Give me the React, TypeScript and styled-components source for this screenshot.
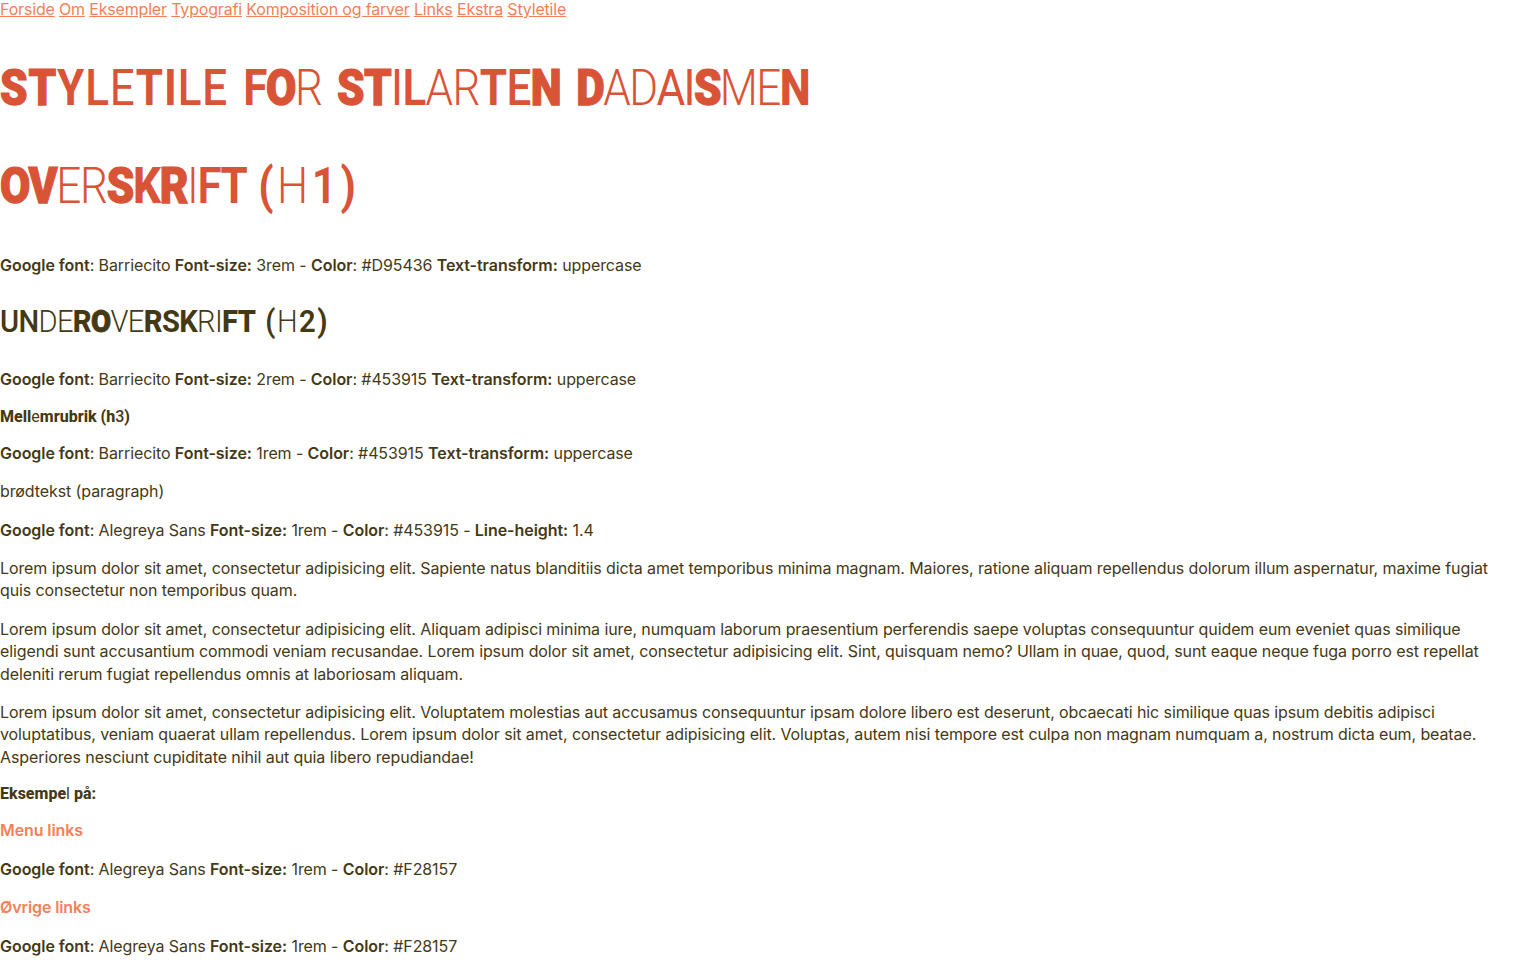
import React from "react";
import styled, { createGlobalStyle } from "styled-components";

const Global = createGlobalStyle`
  html, body { margin: 0; padding: 0; background: #fff; }
  body {
    font-family: "Inter", "Open Sans", sans-serif;
    font-size: 16px;
    letter-spacing: -0.1px;
    color: #453915;
  }
`;

const Nav = styled.nav`
  line-height: 19px;
  letter-spacing: -0.175px;
`;

const NavLink = styled.a`
  color: #f28157;
  text-decoration: underline;
`;

const Heading = styled.h1<{ $squeeze: number; $color: string; $size: number; $height: number; $top: number; $bottom: number; $gap?: number }>`
  margin: ${(p) => p.$top}px 0 ${(p) => p.$bottom}px;
  font-family: "Roboto", sans-serif;
  font-size: ${(p) => p.$size}px;
  line-height: ${(p) => p.$height}px;
  letter-spacing: 0;
  word-spacing: ${(p) => p.$gap ?? 0}px;
  font-weight: 400;
  white-space: nowrap;
  color: ${(p) => p.$color};
  transform: scaleX(${(p) => p.$squeeze});
  transform-origin: left center;
`;

const Word = styled.span<{ $track: number }>`
  letter-spacing: ${(p) => p.$track}px;
`;

const Glyph = styled.span<{ $weight: number }>`
  font-weight: ${(p) => p.$weight};
  -webkit-text-stroke: ${(p) => (p.$weight >= 900 ? "0.025em" : "0")} currentColor;
`;

const Para = styled.p`
  margin: 16px 0;
  line-height: 22.4px;
`;

const Strong = styled.strong`
  font-weight: 600;
  letter-spacing: -0.05px;
`;

const LinkSample = styled.p`
  margin: 16px 0;
  line-height: 22.4px;
  font-weight: 600;
  color: #f28157;
`;

/* Each digit in `w` is the stroke weight of the letter at that place, in hundreds;
   `tracks` holds the letter spacing of each word. */
const Lettered = ({ text, w, tracks = [] }: { text: string; w: string; tracks?: number[] }) => {
  const weights = w.split(" ");
  return (
    <>
      {text.split(" ").map((word, wi) => (
        <React.Fragment key={wi}>
          {wi > 0 && " "}
          <Word $track={tracks[wi] ?? 0}>
            {word.split("").map((c, i) => (
              <Glyph key={i} $weight={Number(weights[wi]?.[i] ?? 4) * 100}>
                {c}
              </Glyph>
            ))}
          </Word>
        </React.Fragment>
      ))}
    </>
  );
};

const links = ["Forside", "Om", "Eksempler", "Typografi", "Komposition og farver", "Links", "Ekstra", "Styletile"];

const Spec = ({ font, size, color, last, lastValue }: { font: string; size: string; color: string; last: string; lastValue: string }) => (
  <Para>
    <Strong>Google font</Strong>: {font} <Strong>Font-size:</Strong> {size} - <Strong>Color</Strong>: {color}
    {last && (
      <>
        {" "}
        <Strong>{last}:</Strong> {lastValue}
      </>
    )}
  </Para>
);

export default function App() {
  return (
    <>
      <Global />
      <Nav>
        {links.map((l, i) => (
          <React.Fragment key={l}>
            {i > 0 && " "}
            <NavLink href="#">{l}</NavLink>
          </React.Fragment>
        ))}
      </Nav>
      <Heading $squeeze={0.88} $color="#d95436" $size={50} $height={66} $top={36} $bottom={32} $gap={5}>
        <Lettered
          text="STYLETILE FOR STILARTEN DADAISMEN"
          w="997547755 793 994633759 933449338"
          tracks={[1, -1.6, -0.7, -1.8]}
        />
      </Heading>
      <Heading $squeeze={0.88} $color="#d95436" $size={50} $height={66} $top={32} $bottom={35} $gap={1}>
        <Lettered text="OVERSKRIFT (H1)" w="9933989367 7367" tracks={[-1.5, 4]} />
      </Heading>
      <Spec font="Barriecito" size="3rem" color="#D95436" last="Text-transform" lastValue="uppercase" />
      <Heading as="h2" $squeeze={0.94} $color="#453915" $size={31} $height={38} $top={27} $bottom={27} $gap={3}>
        <Lettered text="UNDEROVERSKRIFT (H2)" w="553389338773388 6367" tracks={[-0.7, 1.6]} />
      </Heading>
      <Spec font="Barriecito" size="2rem" color="#453915" last="Text-transform" lastValue="uppercase" />
      <Heading as="h3" $squeeze={1} $color="#453915" $size={16} $height={19} $top={15.2} $bottom={16}>
        <Lettered text="Mellemrubrik (h3)" w="888848888888 8858" />
      </Heading>
      <Spec font="Barriecito" size="1rem" color="#453915" last="Text-transform" lastValue="uppercase" />
      <Para>brødtekst (paragraph)</Para>
      <Para>
        <Strong>Google font</Strong>: Alegreya Sans <Strong>Font-size:</Strong> 1rem - <Strong>Color</Strong>: #453915 - <Strong>Line-height:</Strong> 1.4
      </Para>
      <Para>
        Lorem ipsum dolor sit amet, consectetur adipisicing elit. Sapiente natus blanditiis dicta amet temporibus minima magnam. Maiores, ratione aliquam repellendus dolorum illum aspernatur, maxime fugiat quis consectetur non temporibus quam.
      </Para>
      <Para>
        Lorem ipsum dolor sit amet, consectetur adipisicing elit. Aliquam adipisci minima iure, numquam laborum praesentium perferendis saepe voluptas consequuntur quidem eum eveniet quas similique eligendi sunt accusantium commodi veniam recusandae. Lorem ipsum dolor sit amet, consectetur adipisicing elit. Sint, quisquam nemo? Ullam in quae, quod, sunt eaque neque fuga porro est repellat deleniti rerum fugiat repellendus omnis at laboriosam aliquam.
      </Para>
      <Para>
        Lorem ipsum dolor sit amet, consectetur adipisicing elit. Voluptatem molestias aut accusamus consequuntur ipsam dolore libero est deserunt, obcaecati hic similique quas ipsum debitis adipisci voluptatibus, veniam quaerat ullam repellendus. Lorem ipsum dolor sit amet, consectetur adipisicing elit. Voluptas, autem nisi tempore est culpa non magnam numquam a, nostrum dicta eum, beatae. Asperiores nesciunt cupiditate nihil aut quia libero repudiandae!
      </Para>
      <Heading as="h3" $squeeze={1} $color="#453915" $size={16} $height={19} $top={16} $bottom={16}>
        <Lettered text="Eksempel på:" w="88888884 888" />
      </Heading>
      <LinkSample>Menu links</LinkSample>
      <Spec font="Alegreya Sans" size="1rem" color="#F28157" last="" lastValue="" />
      <LinkSample>Øvrige links</LinkSample>
      <Spec font="Alegreya Sans" size="1rem" color="#F28157" last="" lastValue="" />
    </>
  );
}
